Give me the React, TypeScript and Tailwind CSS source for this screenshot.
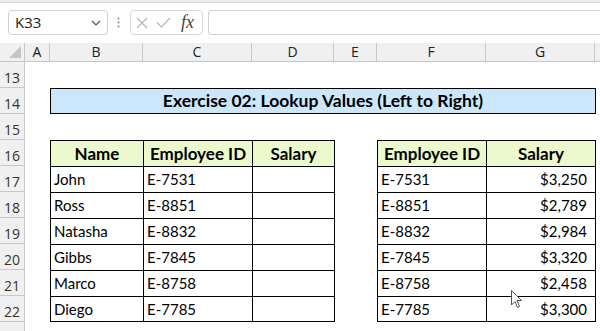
import React from "react";

const ROWH = "h-[26px]";

function RowHead({ n }: { n: number | string }) {
  return (
    <div className="w-[25px] shrink-0 h-full bg-[#f0f0f0] border-r border-b border-[#c8c8c8] flex items-end justify-center pb-[1px] text-[14px] leading-[17px] text-[#333] font-['Open_Sans',sans-serif]">
      {n}
    </div>
  );
}

const tbl1 = [
  ["John", "E-7531"],
  ["Ross", "E-8851"],
  ["Natasha", "E-8832"],
  ["Gibbs", "E-7845"],
  ["Marco", "E-8758"],
  ["Diego", "E-7785"],
];
const tbl2 = [
  ["E-7531", "$3,250"],
  ["E-8851", "$2,789"],
  ["E-8832", "$2,984"],
  ["E-7845", "$3,320"],
  ["E-8758", "$2,458"],
  ["E-7785", "$3,300"],
];

export default function App() {
  const colHeads: [string, string][] = [
    ["A", "w-[25px]"],
    ["B", "w-[93px]"],
    ["C", "w-[109px]"],
    ["D", "w-[82px]"],
    ["E", "w-[43px]"],
    ["F", "w-[109px]"],
    ["G", "w-[109px]"],
  ];
  const hdr = "h-full bg-[#ebf9cc] border-l border-t border-black flex items-center justify-center font-bold text-[17px]";
  return (
    <div className="relative w-[600px] h-[331px] overflow-hidden bg-white font-['Lato',sans-serif] text-black">
      {/* toolbar */}
      <div className="h-[3px] bg-[#ececec] border-b border-[#d6d6d6]" />
      <div className="h-[40px] flex items-start pt-[7px] font-['Open_Sans',sans-serif]">
        <div className="ml-[8px] w-[100px] h-[25px] rounded-[4px] border border-[#d0d0d0] flex items-center justify-between pl-[6px] pr-[6px] text-[15px] text-[#222]">
          <span>K33</span>
          <svg width="10" height="6" viewBox="0 0 10 6">
            <path d="M1 1 L5 5 L9 1" fill="none" stroke="#555" strokeWidth="1.2" />
          </svg>
        </div>
        <div className="w-[21px] h-[25px] flex items-center justify-center">
          <svg width="3" height="11" viewBox="0 0 3 11">
            <circle cx="1.5" cy="1.5" r="1" fill="#888" />
            <circle cx="1.5" cy="5.5" r="1" fill="#888" />
            <circle cx="1.5" cy="9.5" r="1" fill="#888" />
          </svg>
        </div>
        <div className="ml-[1px] w-[73px] h-[25px] rounded-[4px] border border-[#d8d8d8] flex items-center pl-[5px] gap-[8px]">
          <svg width="12" height="12" viewBox="0 0 12 12">
            <path d="M1 1 L11 11 M11 1 L1 11" stroke="#b4b4b4" strokeWidth="1.1" fill="none" />
          </svg>
          <svg width="15" height="11" viewBox="0 0 15 11">
            <path d="M1 5.5 L5.5 10 L14 1" stroke="#b4b4b4" strokeWidth="1.1" fill="none" />
          </svg>
          <span className="italic text-[18px] leading-none text-[#444] font-['Liberation_Serif',serif] ml-[2px] -mt-[2px]">
            fx
          </span>
        </div>
        <div className="ml-[5px] flex-1 h-[25px] rounded-l-[4px] border border-r-0 border-[#d0d0d0]" />
      </div>

      {/* column headers */}
      <div className="h-[19px] flex bg-[#f0f0f0] border-b border-[#c8c8c8] font-['Open_Sans',sans-serif] text-[14px] text-[#222]">
        <div className="w-[25px] h-full border-r border-[#c8c8c8] relative">
          <svg className="absolute right-[3px] bottom-[3px]" width="12" height="12" viewBox="0 0 12 12">
            <path d="M12 0 L12 12 L0 12 Z" fill="#c4c4c4" />
          </svg>
        </div>
        {colHeads.map(([l, w]) => (
          <div key={l} className={`${w} h-full border-r border-[#c8c8c8] flex items-center justify-center leading-none`}>
            {l}
          </div>
        ))}
      </div>

      {/* row 13 */}
      <div className={`${ROWH} flex`}>
        <RowHead n={13} />
      </div>
      {/* row 14: title */}
      <div className={`${ROWH} flex`}>
        <RowHead n={14} />
        <div className="w-[25px]" />
        <div className="w-[546px] h-full bg-[#cce7fc] border border-black flex items-center justify-center font-bold text-[17.5px]">
          Exercise 02: Lookup Values (Left to Right)
        </div>
      </div>
      {/* row 15 */}
      <div className={`${ROWH} flex`}>
        <RowHead n={15} />
      </div>
      {/* row 16: headers */}
      <div className={`${ROWH} flex`}>
        <RowHead n={16} />
        <div className="w-[25px]" />
        <div className={`w-[93px] ${hdr}`}>Name</div>
        <div className={`w-[109px] ${hdr}`}>Employee ID</div>
        <div className={`w-[83px] border-r ${hdr}`}>Salary</div>
        <div className="w-[42px]" />
        <div className={`w-[109px] ${hdr}`}>Employee ID</div>
        <div className={`w-[110px] border-r ${hdr}`}>Salary</div>
      </div>
      {tbl1.map((r, i) => {
        const last = i === tbl1.length - 1;
        const b = last ? "border-b" : "";
        return (
          <div key={i} className={`${ROWH} flex`}>
            <RowHead n={17 + i} />
            <div className="w-[25px]" />
            <div className={`w-[93px] h-full border-l border-t ${b} border-black flex items-center pl-[3px] text-[15px]`}>{r[0]}</div>
            <div className={`w-[109px] h-full border-l border-t ${b} border-black flex items-center pl-[3px] text-[15px]`}>{r[1]}</div>
            <div className={`w-[83px] h-full border-l border-t border-r ${b} border-black`} />
            <div className="w-[42px]" />
            <div className={`w-[109px] h-full border-l border-t ${b} border-black flex items-center pl-[3px] text-[15px]`}>{tbl2[i][0]}</div>
            <div className={`w-[110px] h-full border-l border-t border-r ${b} border-black flex items-center justify-end pr-[8px] text-[15px]`}>{tbl2[i][1]}</div>
          </div>
        );
      })}
      <div className={`${ROWH} flex`}>
        <RowHead n="" />
      </div>

      {/* mouse cursor */}
      <svg className="absolute left-[511px] top-[290px]" width="12" height="19" viewBox="0 0 12 19">
        <path d="M0.5 0.5 L0.5 15 L4 11.5 L6.5 17.5 L8.5 16.5 L6 10.5 L10.5 10.5 Z" fill="#fff" stroke="#555" strokeWidth="1" strokeLinejoin="round" />
      </svg>
    </div>
  );
}
